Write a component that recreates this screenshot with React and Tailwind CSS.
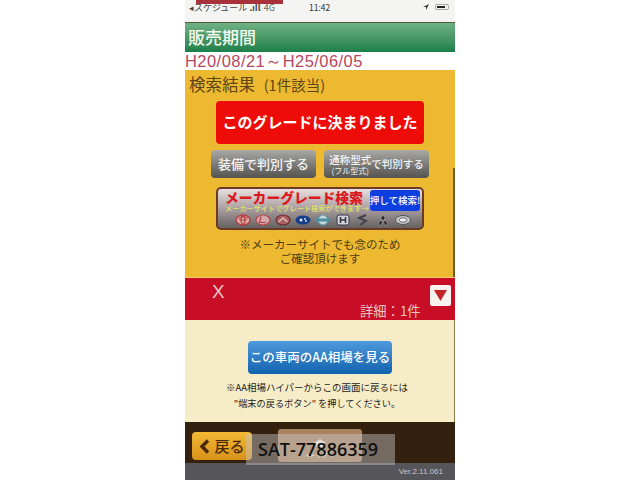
const jp = { fontFamily: '"Noto Sans CJK JP", "Liberation Sans", sans-serif' };

function Emblem({ i }) {
  const shapes = [
    <g key="t"><ellipse cx="8" cy="6" rx="7" ry="5" fill="#d8b0a8" stroke="#b83a40" strokeWidth="1.4" /><ellipse cx="8" cy="6" rx="2" ry="4" fill="none" stroke="#b83a40" strokeWidth="1.2" /><ellipse cx="8" cy="4.5" rx="4.5" ry="1.6" fill="none" stroke="#b83a40" strokeWidth="1" /></g>,
    <g key="l"><ellipse cx="8" cy="6" rx="7" ry="5" fill="#d0a8a8" stroke="#b8444a" strokeWidth="1.2" /><path d="M6 2.5 L4.5 8.5 H11" fill="none" stroke="#b8444a" strokeWidth="1.2" /></g>,
    <g key="m"><ellipse cx="8" cy="6" rx="7" ry="5" fill="#a86060" stroke="#6c2a30" strokeWidth="1.2" /><path d="M3.5 8 L8 4 L12.5 8" fill="none" stroke="#e0c8c8" strokeWidth="1.2" /></g>,
    <g key="s"><ellipse cx="8" cy="6" rx="7.5" ry="4.5" fill="#123f88" /><circle cx="6" cy="6" r="1.5" fill="#e8e8f0" /><circle cx="10" cy="5" r="0.9" fill="#e8e8f0" /><circle cx="11" cy="7" r="0.9" fill="#e8e8f0" /></g>,
    <g key="n"><circle cx="8" cy="6" r="5" fill="#c8d8d8" stroke="#5f9aa8" strokeWidth="1.2" /><rect x="0.5" y="4.5" width="15" height="3" fill="#4d8fa0" /></g>,
    <g key="h"><rect x="2" y="1" width="12" height="10" rx="2" fill="#d4d4d8" stroke="#33364a" strokeWidth="1" /><path d="M5.5 3 V9 M10.5 3 V9 M5.5 6 H10.5" stroke="#33364a" strokeWidth="1.6" /></g>,
    <g key="z"><path d="M11 1 L4 4 L11 7 L5 11" fill="none" stroke="#40424c" strokeWidth="2" /></g>,
    <g key="b"><path d="M8 1 L10 4 L8 7 L6 4 Z M8 7 L5 7 L3 11 L6 11 Z M8 7 L11 7 L13 11 L10 11 Z" fill="#25252a" stroke="#f0f0f0" strokeWidth="0.3" /></g>,
    <g key="d"><ellipse cx="8" cy="6" rx="7.5" ry="4.5" fill="#c8c8c8" stroke="#50525a" strokeWidth="1" /><ellipse cx="8" cy="6" rx="4" ry="2.2" fill="#eeeeee" stroke="#50525a" strokeWidth="0.8" /></g>,
  ];
  return <svg width="16" height="12" viewBox="0 0 16 12">{shapes[i]}</svg>;
}

function App() {
  return (
    <div className="w-[640px] h-[480px] bg-white flex justify-center overflow-hidden" style={jp}>
      <div className="w-[270px] h-[480px] flex flex-col relative">
        {/* status bar */}
        <div className="h-[22px] bg-[#f4f4f2] shrink-0 relative flex items-start justify-between pl-[4px] pr-[6px] pt-[2px] text-[9px] leading-[10px] text-[#444]">
          <div className="absolute left-[11px] top-0 w-[87px] h-[4px] bg-[#a8313a]" />
          <span className="mt-[1px] whitespace-nowrap">◂スケジュール <b>.ıIl</b> <span className="text-[#666] ml-[1px]">4G</span></span>
          <span className="absolute left-[124px] top-[2px] text-[8.5px] text-[#333]">11:42</span>
          <div className="flex items-center gap-[6px] mt-[2px]">
            <svg width="6" height="6" viewBox="0 0 6 6"><path d="M6 0 L0 3 L3 3 L3 6 Z" fill="#333" /></svg>
            <div className="w-[14px] h-[6px] rounded-[2px] border border-[#aaa] p-[1px]"><div className="w-[8px] h-full bg-[#222]" /></div>
          </div>
        </div>
        {/* green header */}
        <div className="h-[30px] shrink-0 border-t border-[#4b5a3a] bg-gradient-to-b from-[#6fb184] to-[#18804a] flex items-start px-[3px]">
          <span className="text-[17px] leading-[28px] font-medium text-[#f4f8ee]">販売期間</span>
        </div>
        {/* date */}
        <div className="h-[18px] shrink-0 bg-white text-[16.5px] tracking-[0.45px] leading-[18px] text-[#b5485c] whitespace-nowrap" style={{ fontFamily: '"Liberation Sans", sans-serif' }}>
          H20/08/21～H25/06/05
        </div>
        {/* yellow */}
        <div className="h-[207px] shrink-0 bg-[#ecb930] flex flex-col items-center relative">
          <div className="absolute right-0 top-[98px] bottom-0 w-[2px] bg-[#6e5a24]" />
          <div className="self-start pl-[4px] pt-[2px] h-[31px] text-[#5f4516] text-[16.5px] leading-[24px] whitespace-nowrap">
            検索結果 <span className="text-[14.5px] ml-[5px]">(1件該当)</span>
          </div>
          <div className="w-[208px] h-[43px] rounded-[4px] bg-[#ee0c08] text-white font-bold text-[15px] flex items-center justify-center whitespace-nowrap">
            このグレードに決まりました
          </div>
          <div className="flex gap-[8px] mt-[6px]">
            <div className="w-[105px] h-[28px] rounded-[4px] bg-gradient-to-b from-[#a9a9a5] to-[#55534f] text-[#f4f4f4] font-medium text-[13px] flex items-center justify-center whitespace-nowrap">
              装備で判別する
            </div>
            <div className="w-[105px] h-[28px] rounded-[4px] bg-gradient-to-b from-[#a9a9a5] to-[#55534f] text-[#f4f4f4] flex items-center justify-center whitespace-nowrap">
              <div className="flex flex-col items-center">
                <span className="text-[10.5px] leading-[12px] font-medium">通称型式</span>
                <span className="text-[8px] leading-[9px]">(フル型式)</span>
              </div>
              <span className="text-[10.5px] font-medium">で判別する</span>
            </div>
          </div>
          {/* maker banner */}
          <div className="w-[208px] h-[43px] mt-[9px] rounded-[5px] border-2 border-[#6e3a28] bg-gradient-to-b from-[#e8e0e0] via-[#ab9fa0] to-[#666262] relative overflow-hidden">
            <div className="absolute left-[7px] top-0 text-[#dc1a1e] font-black text-[13.8px] leading-[17px] whitespace-nowrap">メーカーグレード検索</div>
            <div className="absolute left-[7px] top-[15px] text-[#dfe566] font-medium text-[7.2px] leading-[9px] whitespace-nowrap">メーカーサイトでグレード検索ができます→</div>
            <div className="absolute right-[2px] top-[1px] w-[50px] h-[21px] rounded-[3px] bg-[#0e3ee0] text-white text-[9.5px] font-medium flex items-center justify-center whitespace-nowrap">押して検索!</div>
            <div className="absolute left-[17px] bottom-[2px] flex gap-[4px]">
              {[0, 1, 2, 3, 4, 5, 6, 7, 8].map((i) => (
                <Emblem key={i} i={i} />
              ))}
            </div>
          </div>
          <div className="mt-[7px] text-center text-[#4f3d15] text-[11.5px] leading-[14px]">
            <div>※メーカーサイトでも念のため</div>
            <div>ご確認頂けます</div>
          </div>
        </div>
        {/* red */}
        <div className="h-[43px] shrink-0 bg-[#c80d26] border-t border-[#f5c870] relative text-[#e8c4c4]">
          <span className="absolute left-[27px] top-[2px] text-[19px] leading-[24px]" style={{ fontFamily: '"Liberation Sans", sans-serif' }}>X</span>
          <span className="absolute left-[175px] top-[25px] text-[13.3px] leading-[16px] whitespace-nowrap">詳細：1件</span>
          <div className="absolute right-[4px] top-[7px] w-[21px] h-[21px] rounded-[2px] bg-[#f8f2ee] flex items-center justify-center">
            <svg width="13" height="11" viewBox="0 0 13 11"><path d="M0 0 H13 L6.5 11 Z" fill="#c22428" /></svg>
          </div>
        </div>
        {/* cream */}
        <div className="h-[102px] shrink-0 bg-[#f6edc8] flex flex-col items-center relative">
          <div className="absolute right-0 top-0 bottom-0 w-[1px] bg-[#8a7a50]" />
          <div className="mt-[21px] w-[144px] h-[33px] rounded-[4px] bg-gradient-to-b from-[#4d9ade] to-[#0f62ad] text-white font-medium text-[12.5px] flex items-center justify-center whitespace-nowrap">
            この車両のAA相場を見る
          </div>
          <div className="mt-[5px] pr-[6px] text-center text-[#222] text-[9.5px] leading-[16px] whitespace-nowrap">
            <div>※AA相場ハイパーからこの画面に戻るには</div>
            <div className="text-[9.2px]">"端末の戻るボタン" を押してください。</div>
          </div>
        </div>
        {/* brown footer */}
        <div className="h-[41px] shrink-0 bg-[#33200f] relative">
          <div className="absolute left-[93px] top-[7px] w-[84px] h-[33px] rounded-[3px] bg-[#a8835f] flex flex-col items-center justify-end">
            <svg width="12" height="8" viewBox="0 0 12 8" className="mb-[4px]"><path d="M6 0 L12 4 H10 V8 H2 V4 H0 Z" fill="#f4efe6" /></svg>
            <span className="text-[6px] leading-[8px] text-white whitespace-nowrap mb-[3px]">◂トップへ</span>
          </div>
          <div className="absolute left-[7px] top-[10px] w-[60px] h-[28px] rounded-[4px] bg-gradient-to-b from-[#f3b834] to-[#d8921a] flex items-center justify-center gap-[3px] text-[#4a2a08] whitespace-nowrap">
            <svg width="12" height="15" viewBox="0 0 12 15"><path d="M9 1.5 L3 7.5 L9 13.5" fill="none" stroke="#4a2a08" strokeWidth="3.5" /></svg>
            <span className="text-[15px] font-medium">戻る</span>
          </div>
        </div>
        {/* gray footer */}
        <div className="flex-1 bg-[#56565a] flex items-center justify-end pr-[12px] text-[8px] text-[#c8c8c8]" style={{ fontFamily: '"Liberation Sans", sans-serif' }}>
          Ver.2.11.061
        </div>
        {/* watermark */}
        <div className="absolute left-[61px] top-[434px] w-[149px] h-[31px] bg-[#c8c8c8]/45 flex items-center pl-[12px] text-[18px] font-semibold text-[#111] whitespace-nowrap" style={{ fontFamily: '"Open Sans", "Liberation Sans", sans-serif' }}>
          SAT-77886359
        </div>
      </div>
    </div>
  );
}

export default App;
